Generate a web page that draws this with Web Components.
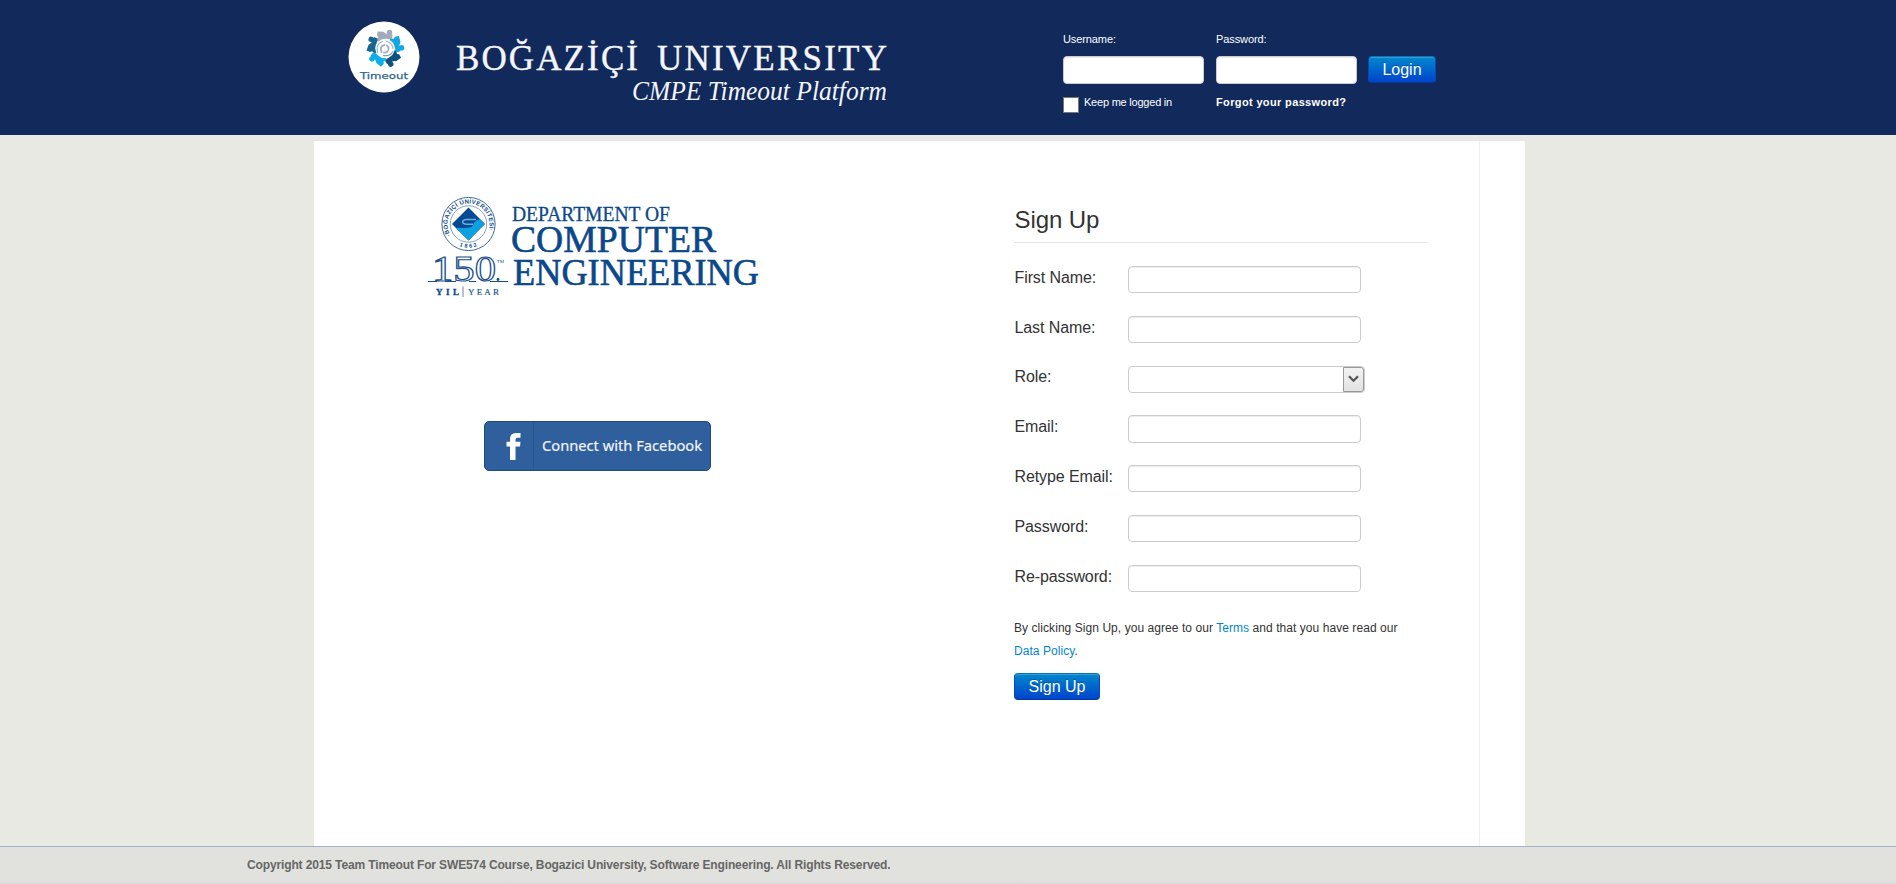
<!DOCTYPE html>
<html lang="en"><head><meta charset="utf-8"><title>CMPE Timeout Platform</title>
<style>
html,body{margin:0;height:100%}
body{background:#e8e9e3;font-family:"Liberation Sans",Arial,sans-serif;color:#333;overflow:hidden}
</style></head><body>
<timeout-app></timeout-app>
<script>
const define=(name,html,init)=>customElements.define(name,class extends HTMLElement{
  constructor(){super();const t=document.createElement('template');t.innerHTML=html;
    this.attachShadow({mode:'open'}).append(t.content.cloneNode(true));}
  connectedCallback(){if(init)init(this,this.shadowRoot);}
});

define('text-field',`<style>
:host{display:block;width:233px;height:27px}
input{display:block;box-sizing:border-box;width:100%;height:100%;margin:0;padding:2px 6px;border:1px solid #ccc;border-radius:4px;background:#fff;box-shadow:inset 0 1px 1px rgba(0,0,0,.075);outline:0}
</style><input>`,(h,r)=>{r.querySelector('input').type=h.getAttribute('type')||'text';});

define('select-field',`<style>
:host{display:flex;justify-content:flex-end;box-sizing:border-box;width:237px;height:27px;border:1px solid #ccc;border-radius:4px;background:#fff}
.arrow{box-sizing:border-box;width:21px;height:25px;border:1px solid #999;border-radius:0 3px 3px 0;background:linear-gradient(#f2f2f2,#e2e2e2);display:flex;align-items:center;justify-content:center}
svg{display:block}
</style><div class="arrow"><svg width="11" height="8" viewBox="0 0 11 8"><path d="M1 1.3 5.5 5.8 10 1.3" fill="none" stroke="#555" stroke-width="2.2"/></svg></div>`);

define('primary-button',`<style>
:host{display:block;height:27px}
button{display:block;box-sizing:border-box;width:100%;height:100%;padding:0;margin:0;border:1px solid;border-color:#0a72bb #0849b6 #063a9c;border-radius:4px;background:linear-gradient(#0088cc,#0044cc);box-shadow:inset 0 1px 0 rgba(255,255,255,.2);color:#fff;font:16px/22px "Liberation Sans",Arial,sans-serif;text-shadow:0 -1px 0 rgba(0,0,0,.25)}
</style><button><slot></slot></button>`);

define('form-row',`<style>
:host{display:grid;grid-template-columns:114px auto;height:49.83px;align-items:start;justify-content:start}
label{font-size:16px;line-height:20px;padding:2px 0 0 .5px;white-space:nowrap;letter-spacing:-.1px}
:host([raised]) label{padding-top:1px}
</style><label></label><slot></slot>`,(h,r)=>{r.querySelector('label').textContent=h.getAttribute('label');});

define('timeout-badge',`<style>:host{display:block;width:72px;height:72px}svg{display:block;overflow:visible}</style>
<svg width="72" height="72" viewBox="0 0 72 72"><circle cx="36" cy="36" r="35.5" fill="#fff"/>
<defs><g id="p"><circle cx="41.500" cy="11.500" r="2.700"/><path d="M29.500 10.500 35.500 10.700Q37.500 13.300 41 13L44.500 13.500 44.200 17.500Q41.500 18.500 38.500 17.800Q33.500 17.200 30.500 20.500L29.300 19.500 30.500 16 29 14.500Z"/></g></defs>
<g fill="#a3a9bd"><use href="#p"/></g><g fill="#12a8df"><use href="#p" transform="rotate(72 37 27.500)"/></g>
<g fill="#0d527f"><use href="#p" transform="rotate(144 37 27.500)"/></g><g fill="#0baee8"><use href="#p" transform="rotate(216 37 27.500)"/></g>
<g fill="#17668f"><use href="#p" transform="rotate(288 37 27.500)"/></g>
<g fill="none" stroke-linecap="round"><path d="M29.500 31Q27.500 23 34.500 20.500" stroke="#8fc0d6" stroke-width="1.300"/><path d="M38 20Q44.500 22 45 27.500" stroke="#aeb6ca" stroke-width="1.300"/><path d="M44.500 31Q42 35.500 35.500 34.500" stroke="#7fa3bb" stroke-width="1.200"/>
<path d="M33.500 31Q31 25.500 36.500 23.800M40 29.500Q39 32 36 31.500M39 24.500Q41 26 40.500 28" stroke="#a9aec2" stroke-width="1.900"/></g>
<text x="12" y="58" font-family="DejaVu Sans,sans-serif" font-size="9.3" fill="#286785" stroke="#286785" stroke-width=".25" textLength="48" lengthAdjust="spacingAndGlyphs">Timeout</text></svg>`);

define('university-title',`<style>:host{display:block;width:440px;height:90px}svg{display:block;overflow:visible}</style>
<svg width="440" height="90" viewBox="450 25 440 90" fill="#f4f6fb">
<g font-family="Liberation Serif,serif" font-size="35" stroke="#f4f6fb" stroke-width=".4">
<text x="456" y="70" textLength="182" lengthAdjust="spacing">BOĞAZİÇİ</text>
<text x="657" y="70" textLength="230" lengthAdjust="spacing">UNIVERSITY</text></g>
<text x="632" y="100" font-family="Liberation Serif,serif" font-style="italic" font-size="28" textLength="255" lengthAdjust="spacingAndGlyphs">CMPE Timeout Platform</text></svg>`);

define('login-form',`<style>
:host{display:grid;grid-template-columns:141px 141px 68px;column-gap:12px;color:#fff;font-size:11px;line-height:14px;align-content:start}
text-field{width:141px;height:28px}
.label{height:24px;letter-spacing:-.1px}
primary-button{margin-left:-1px;width:68px}
.keep{display:flex;margin-top:13px;letter-spacing:-.22px}
.box{box-sizing:border-box;width:16px;height:16px;background:#fff;border:1px solid #777;margin-right:5px}
.keep span{margin-top:-2px}
.forgot{font-weight:bold;margin-top:11px;letter-spacing:.36px;white-space:nowrap}
</style>
<div class="label">Username:</div><div class="label">Password:</div><i></i>
<text-field></text-field><text-field type="password"></text-field><primary-button>Login</primary-button>
<div class="keep"><div class="box"></div><span>Keep me logged in</span></div><div class="forgot">Forgot your password?</div>`);

define('site-header',`<style>
:host{display:flex;align-items:flex-start;height:135px;background:#12295c;box-sizing:border-box;padding-left:348px}
timeout-badge{margin-top:21px}university-title{margin:25px 0 0 30px}login-form{margin:32px 0 0 173px}
</style><timeout-badge></timeout-badge><university-title></university-title><login-form></login-form>`);

define('department-logo',`<style>:host{display:block;width:340px;height:110px}svg{display:block;overflow:visible}</style>
<svg width="340" height="110" viewBox="425 190 340 110" font-family="Liberation Serif,serif" fill="#0b488b">
<circle cx="468.500" cy="224" r="26.600" fill="#fff" stroke="#3e6ba2" stroke-width="1"/>
<circle cx="468.500" cy="224" r="18.200" fill="none" stroke="#6a8cb8" stroke-width=".8"/>
<defs><path id="ring" d="M450.6 235.500A21 21 0 1 1 486.4 235.500"/><path id="low" d="M455 243.500A23.500 23.500 0 0 0 482 243.500"/></defs>
<text font-family="Liberation Sans,sans-serif" font-weight="bold" font-size="6"><textPath href="#ring" textLength="83">·BOĞAZİÇİ ÜNİVERSİTESİ·</textPath></text>
<text font-family="Liberation Sans,sans-serif" font-weight="bold" font-size="5.500"><textPath href="#low" startOffset="5" textLength="18">1863</textPath></text>
<path d="M468.500 207.500 485 224 468.500 240.500 452 224Z" fill="#064a94"/>
<path d="M456 228H466Q472.500 228 473.500 223.500Q476 219.500 480 219.500L484.500 224 468.500 240.500Z" fill="#0ba0df"/>
<path d="M476 219.500H466.500Q462.500 219.800 462.700 222.200Q463 224.300 467 224.300H473" fill="none" stroke="#6bafd8" stroke-width="1.500"/>
<text x="512" y="220.500" font-size="20" textLength="158" lengthAdjust="spacingAndGlyphs" stroke="#0b488b" stroke-width=".3">DEPARTMENT OF</text>
<g font-size="38" stroke="#0b488b" stroke-width=".6"><text x="511" y="252" textLength="205" lengthAdjust="spacingAndGlyphs">COMPUTER</text>
<text x="513" y="284.500" textLength="246" lengthAdjust="spacingAndGlyphs">ENGINEERING</text></g>
<g fill="none" stroke="#174e8c"><text x="432" y="281" font-size="35" stroke-width="1.1" textLength="64" lengthAdjust="spacingAndGlyphs">150</text>
<path d="M428 281.500H437M445 281.500H456M469 281.500H476M490 281.500H508" stroke-width="1"/></g>
<circle cx="498" cy="279.500" r="1.400"/>
<text x="497" y="262.500" font-size="4.500" textLength="7">TM</text>
<text x="436" y="294.500" font-size="9" font-weight="bold" stroke="#0b488b" stroke-width=".3" textLength="23">YIL</text>
<path d="M463 286.500V297" stroke="#6884a8" stroke-width="1"/>
<text x="468" y="294.500" font-size="9" fill="#24578f" stroke="#24578f" stroke-width=".2" textLength="31">YEAR</text></svg>`);

define('facebook-button',`<style>
:host{display:flex;box-sizing:border-box;width:227px;height:50px;border:1px solid #1f4a80;border-radius:5px;background:#305f9e;color:#f0f4fa}
.icon{box-sizing:border-box;width:49px;border-right:1px solid #2a5591;padding:10px 0 0 20px}
svg{display:block}.t{padding-left:8px}
</style><div class="icon"><svg width="17" height="29" viewBox="0 0 17 29"><path d="M5 28V14.500H1.500V9.700H5V7Q5 1 11 1H15.500V5.800H12.500Q10.500 5.800 10.500 7.700V9.700H15.500L15 14.500H10.500V28Z" fill="#fff"/></svg></div>
<div class="t"><svg width="165" height="48"><text x="0" y="29" fill="currentColor" stroke="currentColor" stroke-width=".2" font-family="Noto Sans,sans-serif" font-size="15" textLength="160" lengthAdjust="spacingAndGlyphs">Connect with Facebook</text></svg></div>`);

define('signup-form',`<style>
:host{display:block;width:413px}
h2{margin:0 0 23px;padding:1px 0 0 .5px;height:42px;box-sizing:border-box;border-bottom:1px solid #e5e5e5;font-weight:normal;font-size:24px;line-height:36px;letter-spacing:-.1px}
p{margin:0;font-size:12px;line-height:23px;letter-spacing:.06px}
a{color:#08c;text-decoration:none}
primary-button{width:86px;margin-top:10px}
.tall{height:28px}
.rows{height:351.2px}
</style><h2>Sign Up</h2><div class="rows">
<form-row label="First Name:"><text-field></text-field></form-row>
<form-row label="Last Name:"><text-field></text-field></form-row>
<form-row label="Role:" raised><select-field></select-field></form-row>
<form-row label="Email:"><text-field class="tall"></text-field></form-row>
<form-row label="Retype Email:"><text-field></text-field></form-row>
<form-row label="Password:"><text-field type="password"></text-field></form-row>
<form-row label="Re-password:"><text-field type="password"></text-field></form-row></div>
<p>By clicking Sign Up, you agree to our <a>Terms</a> and that you have read our<br><a>Data Policy</a>.</p>
<primary-button>Sign Up</primary-button>`);

define('main-panel',`<style>
:host{display:flex;box-sizing:border-box;width:1211px;height:705px;margin:6px 0 0 314px;background:#fff}
.content{display:flex;align-items:flex-start;box-sizing:border-box;width:1166px;border-right:1px solid #eee}
.brand{width:700px;box-sizing:border-box;padding:49px 0 0 111px}
facebook-button{margin:121px 0 0 59px}
signup-form{margin-top:60px}
</style><div class="content"><div class="brand"><department-logo></department-logo><facebook-button></facebook-button></div><signup-form></signup-form></div>`);

define('site-footer',`<style>
:host{display:block;box-sizing:border-box;height:38px;border-top:1px solid #a5b2ca;background:linear-gradient(#e1e2de 0 33px,#dadbd8);padding:10px 0 0 247px;font-size:12px;line-height:16px;font-weight:bold;color:#666;white-space:nowrap;letter-spacing:-.13px}
</style><slot></slot>`);

define('timeout-app',`<style>:host{display:flex;flex-direction:column;height:884px}</style>
<site-header></site-header><main-panel></main-panel>
<site-footer>Copyright 2015 Team Timeout For SWE574 Course, Bogazici University, Software Engineering. All Rights Reserved.</site-footer>`);
</script></body></html>
